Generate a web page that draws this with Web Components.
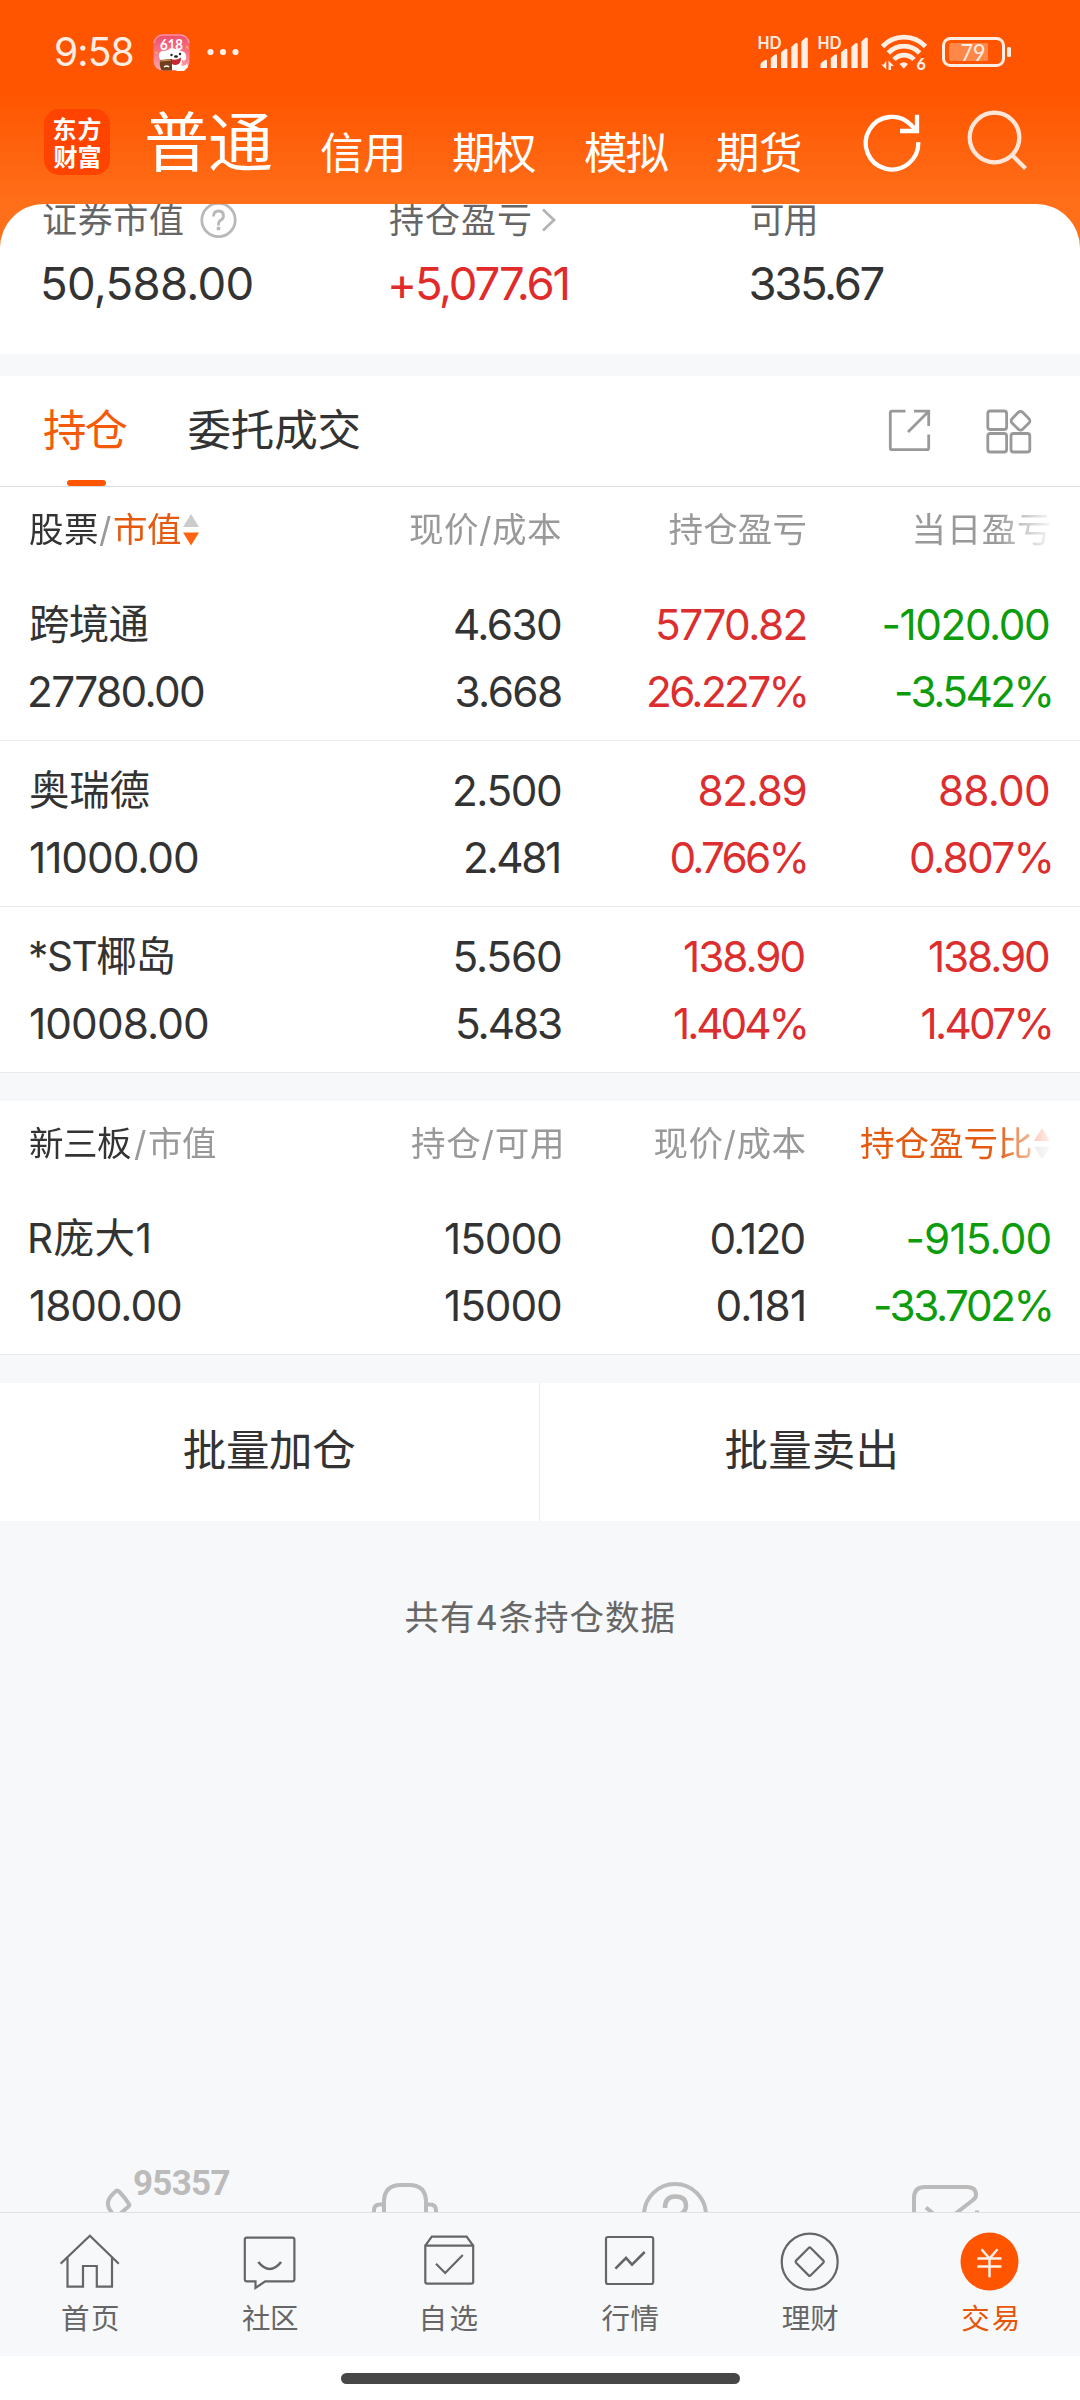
<!DOCTYPE html>
<html lang="zh-CN">
<head>
<meta charset="utf-8">
<title>交易</title>
<style>
html,body{margin:0;padding:0}
body{width:1080px;height:2400px;overflow:hidden;background:#fff;font-family:Inter,"Noto Sans CJK SC",sans-serif;color:#333}
</style>
</head>
<body>
<trade-app></trade-app>
<script>
const def = (name, html, cls) => {
  const t = document.createElement('template');
  t.innerHTML = html;
  const Base = cls || class extends HTMLElement {};
  customElements.define(name, class extends Base {
    constructor() {
      super();
      this.attachShadow({ mode: 'open' }).appendChild(t.content.cloneNode(true));
    }
  });
};

/* Text whose glyph edges span exactly the width given in `w`. */
const pen = document.createElement('canvas').getContext('2d');
def('fit-text', `<style>:host{display:block;white-space:nowrap;flex:none}span{display:block}</style><span><slot></slot></span>`,
class extends HTMLElement {
  connectedCallback() {
    const cs = getComputedStyle(this), s = this.textContent, w = +this.getAttribute('w');
    pen.font = cs.fontWeight + ' ' + cs.fontSize + ' ' + cs.fontFamily;
    const m = pen.measureText(s), n = [...s].length;
    const ink = m.actualBoundingBoxLeft + m.actualBoundingBoxRight;
    this.style.width = w + 'px';
    const span = this.shadowRoot.querySelector('span');
    span.style.marginLeft = m.actualBoundingBoxLeft + 'px';
    if (n > 1) span.style.letterSpacing = ((w - ink) / (n - 1)).toFixed(3) + 'px';
  }
});

def('status-bar', `<style>
:host{display:flex;height:104px;align-items:center;color:#ffeee4;box-sizing:border-box;padding-left:56px}
.time{font-size:39px;line-height:104px}
.promo{margin-left:20px}.dots{margin-left:17px}.sys{margin-left:518.5px}
svg{display:block;flex:none}
</style>
<fit-text class="time" w="76.5">9:58</fit-text>
<svg class="promo" width="37" height="37" viewBox="0 0 37 37">
 <defs><linearGradient id="p" x1="0" y1="0" x2="0" y2="1"><stop offset="0" stop-color="#ee4d6c"/><stop offset=".5" stop-color="#f77488"/><stop offset="1" stop-color="#fba8ae"/></linearGradient></defs>
 <rect x=".5" y=".5" width="36" height="36" rx="9" fill="url(#p)"/>
 <path d="M1 9A9 9 0 0 1 10 1h17a9 9 0 0 1 9 8" fill="none" stroke="#fb91a0" stroke-width="1.5"/>
 <path d="M34 11l2 4-3-1zM3 17l2 2-3 1z" fill="#ffb23c"/>
 <text x="18.5" y="16" text-anchor="middle" font-family="Lato" font-weight="700" font-size="16" fill="#fff" textLength="23" lengthAdjust="spacingAndGlyphs">618</text>
 <path d="M6 23c-1-5 3-7 6-6 3-2 12-3 16 0 4 0 6 4 5 8-1 2-3 2-4 1 0 7-2 10-8 10s-9-4-9-8c-3 0-5-2-6-5z" fill="#fff"/>
 <path d="M27 31c4 2 7 0 7-2l1 4-4 4h-8z" fill="#fff"/>
 <circle cx="18.500" cy="21" r="1.200" fill="#222"/><circle cx="27" cy="20" r="1.200" fill="#222"/>
 <ellipse cx="23" cy="22.500" rx="2" ry="1.300" fill="#222"/>
 <path d="M17 25q6 2 11-1.500q0 7-5 7.500t-6-6z" fill="#c92832"/>
 <path d="M7 26l12-1v11.500h-10q-3-3-2-10.500z" fill="#70401e"/>
 <path d="M7 27l11-1" stroke="#d39a57" stroke-width="1.200"/><path d="M11 33q3-2 5 0" stroke="#fff" fill="none" stroke-width="1.500"/>
</svg>
<svg class="dots" width="32" height="8" viewBox="0 0 32 8" fill="#ffeee4"><circle cx="3.5" cy="4" r="3.100"/><circle cx="16" cy="4" r="3.100"/><circle cx="28.500" cy="4" r="3.100"/></svg>
<svg class="sys" width="256" height="40" viewBox="758 32 256 40" fill="#ffeee4">
 <defs><g id="sig"><text x="758.5" y="48.500" font-family="Lato" font-weight="700" font-size="16.500" textLength="24" lengthAdjust="spacingAndGlyphs">HD</text>
 <path d="M761.500 64.500q0-1 1-2l3.500-2.500q2-.8 2 1V68h-6.500zM771.800 58l4-3.300q2-1 2.200 1V68h-6.200zM782 52.500l4-3.500q2.200-1 2.400 1V68H782zM792.300 47l4-3.700q2.200-1 2.400 1V68h-6.400zM802.400 41.500l4-3.700q2-1 2.400 1V68h-6.400z"/></g></defs>
 <use href="#sig"/><use href="#sig" x="60"/>
 <g fill="none" stroke="#ffeee4" stroke-width="4.800"><path d="M883.500 46.500a29.500 29.500 0 0 1 43 0"/><path d="M889.300 53a21.300 21.300 0 0 1 31.300 0"/><path d="M895 59.500a13.500 13.500 0 0 1 20 0"/></g>
 <path d="M900.500 64q4.300-3.500 8.500 0l-4.200 4.800zM887.300 60.500v9l-5-5h2.500v0zM889.500 70V60.500l5.500 5.500h-3v4z"/>
 <text x="917.500" y="70" font-family="Lato" font-weight="900" font-size="16">6</text>
 <rect x="950" y="43" width="39" height="18" rx="2" fill="#ff8848"/>
 <rect x="944.500" y="38.500" width="60" height="27" rx="7" fill="none" stroke="#ffeee4" stroke-width="3"/>
 <rect x="1008" y="47" width="4" height="10" rx="1.500"/>
 <text x="961.500" y="60.800" font-family="Lato" font-size="23" textLength="25" lengthAdjust="spacingAndGlyphs">79</text>
</svg>`);

def('app-bar', `<style>
:host{display:flex;height:100px;padding-left:44px;color:#fff}
.logo{width:66px;height:66px;box-sizing:border-box;margin-top:5px;padding:5px 0 0 9.500px;border-radius:15px;background:#ff4300;flex:none}
.logo fit-text{font-size:24px;line-height:28px;font-weight:700;font-family:"Noto Sans CJK SC",sans-serif}
.main{font-size:65px;line-height:77px;margin-left:37px}
.sub{font-size:43.500px;line-height:99px}
svg{display:block;flex:none;margin:2px 0 0 57px}
</style>
<div class="logo"><fit-text w="47">东方</fit-text><fit-text w="47">财富</fit-text></div>
<fit-text class="main" w="124">普通</fit-text>
<fit-text class="sub" style="margin-left:50px" w="81">信用</fit-text>
<fit-text class="sub" style="margin-left:51px" w="83">期权</fit-text>
<fit-text class="sub" style="margin-left:49px" w="83.500">模拟</fit-text>
<fit-text class="sub" style="margin-left:48.500px" w="84">期货</fit-text>
<svg width="176" height="70" viewBox="858 107 176 70" fill="none" stroke-width="4.300">
 <path d="M911.500 126.500A26.300 26.300 0 1 0 918.300 143.200M900 132h17V115.700" stroke="#fff"/>
 <path d="M911 126l5 5" stroke="#fff"/>
 <g stroke="#ffe6d8"><circle cx="994.500" cy="138.500" r="24.800"/><path d="M1011.500 155.500l14 14"/></g>
</svg>`);

def('account-summary', `<style>
:host{display:block;height:150px;background:#fff;border-radius:44px 44px 0 0;overflow:hidden;flex:none}
.grid{display:grid;grid-template-columns:346px 361.500px 1fr;padding-left:43px}
.label{display:flex;align-items:center;font-size:35px;line-height:32px;height:32px;color:#666}
.val{font-size:45.500px;line-height:64px;margin-top:15.500px}
svg{display:block}
.red{color:#e12b2b;margin-left:2px}
</style>
<div class="grid">
<div><div class="label"><fit-text w="140">证券市值</fit-text><svg style="margin-left:16px" width="38" height="38" viewBox="0 0 38 38" fill="none" stroke="#b8b8b8" stroke-width="2.800"><circle cx="19.500" cy="19" r="16.700"/><path d="M14.500 15.500q0-5.500 5-5.500t5 5q0 2.500-2.500 4t-2.500 4v1.500"/><circle cx="19.500" cy="27.500" r="1" stroke-width="2"/></svg></div><fit-text class="val" w="208.500">50,588.00</fit-text></div>
<div><div class="label"><fit-text w="141">持仓盈亏</fit-text><svg style="margin-left:11px" width="16" height="26" viewBox="0 0 16 26" fill="none" stroke="#b4b4b4" stroke-width="2.800"><path d="M2 2.500L13 13 2 23.500"/></svg></div><fit-text class="val red" w="176.500">+5,077.61</fit-text></div>
<div><div class="label"><fit-text w="65">可用</fit-text></div><fit-text class="val" w="133">335.67</fit-text></div>
</div>`);

def('holding-tabs', `<style>
:host{display:flex;height:110px;border-bottom:1px solid #ddd;background:#fff;padding-left:44px;flex:none}
.tab{font-size:43.500px;line-height:108px;height:110px}
.on{color:#f55a0a}
.on i{display:block;width:39px;height:6px;border-radius:3px;background:#ff5500;margin:-4px 0 0 23px}
svg{display:block;margin:30px 0 0 524px}
</style>
<div class="tab on"><fit-text w="83.500">持仓</fit-text><i></i></div>
<fit-text class="tab" style="margin-left:61px" w="171">委托成交</fit-text>
<svg width="152" height="50" viewBox="884 406 152 50" fill="none" stroke="#999" stroke-width="2.800">
 <path d="M905.500 411.200H892q-1.700 0-1.700 1.700V448q0 1.700 1.700 1.700H927q1.700 0 1.700-1.700V434.500M914 411.200h14.700V426M928 412L908 432"/>
 <rect x="987.800" y="411" width="18.800" height="18.500" rx="2.500"/><rect x="987.800" y="433.500" width="18.800" height="18.500" rx="2.500"/><rect x="1011" y="433.500" width="18.800" height="18.500" rx="2.500"/>
 <rect x="1013" y="413.300" width="15" height="15" rx="3" transform="rotate(45 1020.500 420.800)"/>
</svg>`);

def('sort-mark', `<style>:host{display:block}svg{display:block}</style>
<svg width="16" height="32" viewBox="0 0 16 32"><path class="u" d="M8 0l8 13H0z"/><path class="d" d="M0 18.500h16L8 31.500z"/></svg>`,
class extends HTMLElement {
  connectedCallback() {
    const up = this.hasAttribute('up');
    this.shadowRoot.querySelector('.u').setAttribute('fill', up ? '#fb7440' : '#ccc');
    this.shadowRoot.querySelector('.d').setAttribute('fill', up ? '#ccc' : '#ff6310');
  }
});

def('table-head', `<style>
:host{display:grid;grid-template-columns:380px 151px 244.500px 244.500px;height:88px;padding-left:30px;font-size:34.500px;line-height:86px;color:#999;
 -webkit-mask-image:linear-gradient(to right,#000 996px,transparent 1056px);mask-image:linear-gradient(to right,#000 996px,transparent 1056px)}
div{display:flex;align-items:center;justify-content:flex-end;height:86px}
.first{justify-content:flex-start}
</style><div class="first"><slot name="a"></slot></div><div><slot name="b"></slot></div><div><slot name="c"></slot></div><div><slot name="d"></slot></div>`);

/* One holding: two stacked lines, four columns. Each cell is "text|width|right inset". */
def('holding-row', `<style>
:host{display:grid;grid-template-columns:380px 151px 244.500px 245px;grid-template-rows:16px 67px 67px;height:165px;padding-left:30px;border-bottom:1px solid #ebebeb}
:host::before{content:"";grid-column:1/-1;height:16px}
fit-text{font-size:42.300px;line-height:67px;justify-self:end}
fit-text.n{justify-self:start}
fit-text.name{font-size:40.500px}
.red{color:#dc2e2e}.green{color:#0c9c0c}
</style>`,
class extends HTMLElement {
  connectedCallback() {
    const tones = (this.getAttribute('tones') || ',').split(',');
    ['top', 'bottom'].forEach((k, r) => this.getAttribute(k).split(';').forEach((c, i) => {
      const [t, w, inset] = c.split('|');
      const e = document.createElement('fit-text');
      e.textContent = t;
      e.setAttribute('w', w);
      if (inset) e.style.marginRight = inset + 'px';
      if (i === 0) e.classList.add('n');
      if (i === 0 && r === 0) e.classList.add('name');
      if (i > 1 && tones[i - 2]) e.classList.add(tones[i - 2]);
      this.shadowRoot.appendChild(e);
    }));
  }
});

def('batch-actions', `<style>
:host{display:grid;grid-template-columns:539px 1fr;height:138px;background:#fff;font-size:43.500px;line-height:135px;flex:none}
div{display:flex;justify-content:center}
div+div{border-left:1px solid #ebebeb}
</style><div><fit-text w="171.500">批量加仓</fit-text></div><div><fit-text w="169">批量卖出</fit-text></div>`);

def('service-strip', `<style>
:host{display:flex;height:46px;overflow:hidden;flex:none;color:#bbb}
div{width:270px;display:flex;justify-content:center}
svg{display:block}
.phone{justify-content:flex-start;padding-left:104px;box-sizing:border-box}
fit-text{font:700 35px Roboto,sans-serif;line-height:35px}
</style>
<div class="phone"><svg width="30" height="46" viewBox="104 2166 30 46" fill="none" stroke="#bbb" stroke-width="4"><path d="M114 2215q-7-7-6-13 1-5 7.500-10.500 1.500-2 3.500 0 6 6 10 12.500.8 1.500-.5 2.500l-8 7"/></svg><fit-text w="95.500">95357</fit-text></div>
<div><svg width="70" height="46" viewBox="370 2166 70 46" fill="none" stroke="#bbb" stroke-width="4"><path d="M384 2215V2202q0-17 17-17h8q17 0 17 17V2215M384 2204.500h-4q-6 0-6 6v4M426 2204.500h4q6 0 6 6v4"/></svg></div>
<div><svg width="70" height="46" viewBox="640 2166 70 46" fill="none" stroke="#bbb" stroke-width="4"><circle cx="675" cy="2215" r="31"/><path d="M665 2208q0-11.500 10.500-11.500t10.500 9.500q0 5-5 8" stroke-width="4.500"/></svg></div>
<div><svg width="70" height="46" viewBox="910 2166 70 46" fill="none" stroke="#bbb" stroke-width="4"><path d="M914 2215V2198q0-11 11-11h42q9 0 9 8 0 3-3 5l-18 14M926 2207.500l9 7.500M975 2212.500h4"/></svg></div>`);

def('nav-item', `<style>
:host{display:flex;flex-direction:column;align-items:center;width:180px;color:#666;font-size:28.500px;line-height:40px}
:host([active]){color:#e65508}
::slotted(svg){display:block;margin-top:19px;margin-bottom:7px}
</style><slot name="icon"></slot><slot></slot>`);

def('bottom-nav', `<style>
:host{display:flex;height:143px;border-top:1px solid #e0e1e3;background:#f7f8fa;flex:none}
svg{fill:none;stroke:#666;stroke-width:2.200}
</style>
<nav-item><svg slot="icon" width="60" height="60" viewBox="60 2232 60 60"><path d="M60.600 2263.700L89.900 2235.700 118.800 2263.700M67.500 2257.500V2286.700H83V2266H96.800V2286.700H112V2257.500"/></svg><fit-text w="56">首页</fit-text></nav-item>
<nav-item><svg slot="icon" width="60" height="60" viewBox="240 2232 60 60"><path d="M246.800 2237.700H292.400q2 0 2 2V2279.300q0 2-2 2H265.200L255.500 2288V2281.300H246.800q-2 0-2-2V2239.700q0-2 2-2z"/><path d="M258.300 2262q11.500 14 22.800 0" stroke-width="2.600"/></svg><fit-text w="56">社区</fit-text></nav-item>
<nav-item><svg slot="icon" width="60" height="60" viewBox="420 2232 60 60"><path d="M425.300 2245.700H473.200V2281.500q0 2.200-2 2.200H427.300q-2 0-2-2.200zL431.800 2236.700H466.600L473.200 2245.700"/><path d="M436 2263.700l9.200 9.300L462.800 2255"/></svg><fit-text w="55">自选</fit-text></nav-item>
<nav-item><svg slot="icon" width="60" height="60" viewBox="600 2232 60 60"><rect x="606" y="2237" width="47.200" height="47" rx="2"/><path d="M615.400 2268.700L626 2258 632 2264.700 644.700 2252" stroke-width="2.600"/></svg><fit-text w="57">行情</fit-text></nav-item>
<nav-item><svg slot="icon" width="60" height="60" viewBox="780 2232 60 60"><circle cx="809.700" cy="2261.700" r="28"/><rect x="799.300" y="2251.300" width="20.800" height="20.800" rx="1.500" transform="rotate(45 809.700 2261.700)"/></svg><fit-text w="56.500">理财</fit-text></nav-item>
<nav-item active><svg slot="icon" width="60" height="60" viewBox="960 2232 60 60"><circle cx="989.500" cy="2261.500" r="29" fill="#ff5500" stroke="none"/><path d="M981.500 2249.300l8 9.200 8-9.200M989.500 2258V2277.300M977.300 2258.400H1001.500M977.300 2266.400H1001.500" stroke="#ffefe6" stroke-width="2.500"/></svg><fit-text w="55.500">交易</fit-text></nav-item>`);

def('trade-app', `<style>
:host{display:flex;flex-direction:column;width:1080px;height:2400px;background:#f7f8fa}
.top{background:linear-gradient(#ff5500 0,#ff5500 92px,#ff6e19 200px);height:354px;flex:none}
.gap{height:22px;flex:none}.gap.b{height:28px}
.card{background:#fff;flex:none}
.dark{color:#333}.hot{color:#e45a10}
.note{display:flex;justify-content:center;font-size:34.500px;line-height:61px;color:#666;margin-top:66px}
.fill{flex:1}
.home{height:44px;background:#fff;display:flex;justify-content:center;flex:none}
.home i{width:399px;height:10.500px;border-radius:6px;background:#474747;margin-top:17px}
</style>
<div class="top"><status-bar></status-bar><app-bar></app-bar><account-summary></account-summary></div>
<div class="gap"></div>
<holding-tabs></holding-tabs>
<div class="card">
<table-head><fit-text slot="a" class="dark" w="67">股票</fit-text><fit-text slot="a" style="margin-left:2px" w="11.500">/</fit-text><fit-text slot="a" class="hot" style="margin-left:3.500px" w="67">市值</fit-text><sort-mark slot="a" style="margin-left:1.500px"></sort-mark>
<fit-text slot="b" w="151">现价/成本</fit-text><fit-text slot="c" w="137">持仓盈亏</fit-text><fit-text slot="d" w="135.500">当日盈亏</fit-text></table-head>
<holding-row tones="red,green" top="跨境通|118.500;4.630|106;5770.82|147.500;-1020.00|165.500|1.500" bottom="27780.00|174;3.668|104.500;26.227%|156.500;-3.542%|154.500"></holding-row>
<holding-row tones="red,red" top="奥瑞德|118.500;2.500|106;82.89|106;88.00|109|1.500" bottom="11000.00|168;2.481|93|2;0.766%|134;0.807%|139.500"></holding-row>
<holding-row tones="red,red" top="*ST椰岛|143.500;5.560|105.500;138.90|120.500|1;138.90|120|1.500" bottom="10008.00|178;5.483|103;1.404%|131.500;1.407%|129"></holding-row>
</div>
<div class="gap b"></div>
<div class="card">
<table-head><fit-text slot="a" class="dark" w="101">新三板</fit-text><fit-text slot="a" style="margin-left:3px" w="11.500">/</fit-text><fit-text slot="a" style="margin-left:3.500px" w="67">市值</fit-text>
<fit-text slot="b" w="150">持仓/可用</fit-text><fit-text slot="c" w="151">现价/成本</fit-text><fit-text slot="d" class="hot" w="171">持仓盈亏比</fit-text><sort-mark slot="d" up style="margin-left:3px"></sort-mark></table-head>
<holding-row tones=",green" top="R庞大1|118.500;15000|116;0.120|93|1;-915.00|143" bottom="1800.00|151;15000|116;0.181|86.500|1.500;-33.702%|175.500"></holding-row>
</div>
<div class="gap b"></div>
<batch-actions></batch-actions>
<div class="note"><fit-text w="269">共有4条持仓数据</fit-text></div>
<div class="fill"></div>
<service-strip></service-strip>
<bottom-nav></bottom-nav>
<div class="home"><i></i></div>`);
</script>
</body>
</html>
